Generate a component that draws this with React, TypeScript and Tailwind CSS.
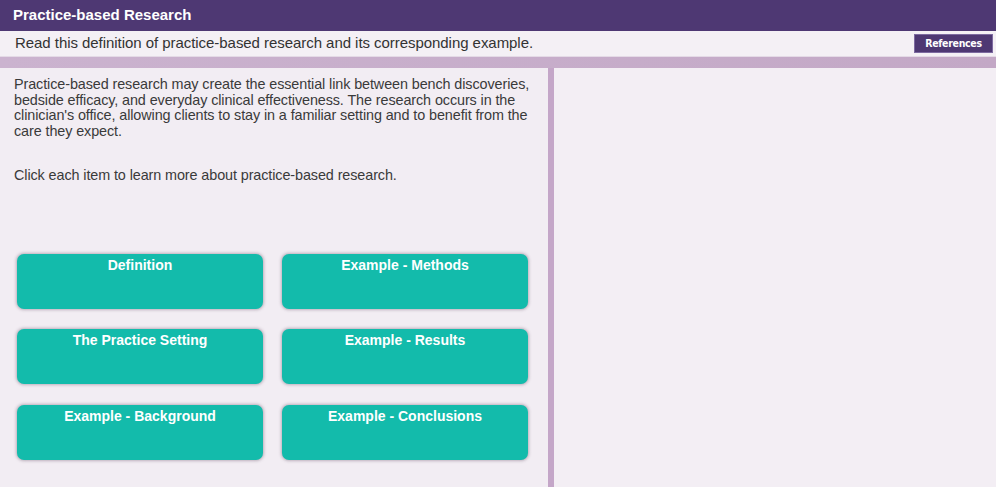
import React from "react";

const items = [
  "Definition",
  "Example - Methods",
  "The Practice Setting",
  "Example - Results",
  "Example - Background",
  "Example - Conclusions",
];

export default function App() {
  return (
    <div
      className="w-[996px] h-[487px] overflow-hidden flex flex-col bg-[#f2edf3]"
      style={{ fontFamily: '"Liberation Sans", Arial, sans-serif' }}
    >
      <div className="h-[31px] shrink-0 bg-[#4e3873] flex items-center pl-[13px]">
        <span className="text-white font-bold text-[15px]">Practice-based Research</span>
      </div>
      <div className="h-[26px] shrink-0 bg-[#f4f0f5] border-b border-[#e4dae6] flex items-center justify-between pl-[15px] pr-[3px]">
        <span className="text-[15px] text-[#333333] tracking-[-0.05px]">
          Read this definition of practice-based research and its corresponding example.
        </span>
        <div className="w-[79px] h-[19px] bg-[#4e3873] border border-[#7d6aa0] flex items-center justify-center">
          <span className="text-white font-bold text-[10.5px] tracking-[-0.3px]" style={{ fontFamily: '"DejaVu Sans Condensed", "Liberation Sans Narrow", sans-serif' }}>
            References
          </span>
        </div>
      </div>
      <div className="h-[11px] shrink-0 bg-gradient-to-r from-[#cbb3cf] to-[#c3a8c6]" />
      <div className="flex flex-1 min-h-0">
        <div className="w-[548px] shrink-0 bg-[#f2edf3] pl-[14px] pr-[8px] pt-[9px] flex flex-col">
          <p className="text-[14.4px] leading-[15.5px] text-[#3a3a3a] tracking-[-0.1px]">
            Practice-based research may create the essential link between bench discoveries, bedside efficacy, and everyday clinical effectiveness. The research occurs in the clinician's office, allowing clients to stay in a familiar setting and to benefit from the care they expect.
          </p>
          <p className="mt-[29px] text-[14.4px] leading-[15.5px] text-[#3a3a3a] tracking-[-0.1px]">
            Click each item to learn more about practice-based research.
          </p>
          <div className="mt-[70px] ml-[3px] grid grid-cols-[246px_246px] gap-x-[19px] gap-y-[20.5px]">
            {items.map((t) => (
              <div
                key={t}
                className="h-[55px] rounded-[7px] bg-[#13bbab] shadow-[0_0_3px_1px_rgba(120,100,120,0.45)] flex justify-center pt-[1px]"
              >
                <span className="text-white font-bold text-[14px]">{t}</span>
              </div>
            ))}
          </div>
        </div>
        <div className="w-[6px] shrink-0 bg-[#c4a6c8]" />
        <div className="flex-1 bg-[#f3eef4]" />
      </div>
    </div>
  );
}
